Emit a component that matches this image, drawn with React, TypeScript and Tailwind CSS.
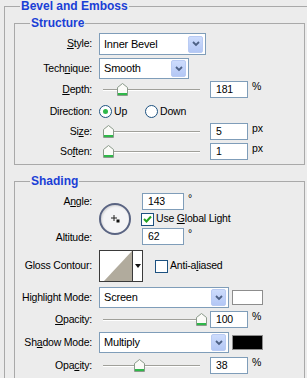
import React from 'react';

const font = { fontFamily: '"Liberation Sans", Arial, sans-serif' };

function Key({ text, k }: { text: string; k?: number }) {
	if (k === undefined) return <>{text}</>;
	return (
		<>
			{text.slice(0, k)}
			<span className="underline underline-offset-[1px]">{text[k]}</span>
			{text.slice(k + 1)}
		</>
	);
}

function Label({ text, k }: { text: string; k?: number }) {
	return (
		<div className="w-[78px] shrink-0 text-right pr-[1px] whitespace-nowrap">
			<Key text={text} k={k} />
		</div>
	);
}

function Chevron() {
	return (
		<div className="w-[15px] h-[17px] mr-[2px] rounded-[2px] bg-gradient-to-b from-[#cddcfc] to-[#b3c7f5] border border-[#b9cbf3] flex items-center justify-center">
			<svg width="8" height="6" viewBox="0 0 8 6">
				<polyline points="1,1 4,4 7,1" fill="none" stroke="#4d6185" strokeWidth="1.8" />
			</svg>
		</div>
	);
}

function Select({ value, w, h = 21 }: { value: string; w: string; h?: number }) {
	return (
		<div
			className={`${w} flex items-center justify-between bg-white border border-[#7f9db9]`}
			style={{ height: h }}
		>
			<span className="pl-[4px] text-[11px]">{value}</span>
			<Chevron />
		</div>
	);
}

function Input({ value, w = 'w-[38px]' }: { value: string; w?: string }) {
	return (
		<div className={`${w} h-[17px] bg-white border border-[#7f9db9] pl-[5px] leading-[15px]`}>{value}</div>
	);
}

function Slider({ pos }: { pos: number }) {
	// pos = thumb centre, px from the slider's left edge
	return (
		<div className="relative w-[106px] h-[14px]">
			<div className="absolute left-[4px] right-[5px] top-[6px] h-[2px] border-t border-[#a0a09a] border-b border-b-white" />
			<svg className="absolute top-0" style={{ left: pos - 5 }} width="11" height="13" viewBox="0 0 11 13">
				<path d="M0.5 4.5 L5.5 0.5 L10.5 4.5 V12.5 H0.5 Z" fill="#fbfbf8" stroke="#8a9a8a" />
				<rect x="1" y="10" width="9" height="2" fill="#2fb84a" />
			</svg>
		</div>
	);
}

function Unit({ text }: { text: string }) {
	return <span className="ml-[4px] self-start leading-[11px]">{text}</span>;
}

function Radio({ checked }: { checked?: boolean }) {
	return (
		<div className="w-[13px] h-[13px] rounded-full border border-[#1c5180] bg-white flex items-center justify-center">
			{checked && <div className="w-[5px] h-[5px] rounded-full bg-[#2fb84a]" />}
		</div>
	);
}

function Checkbox({ checked }: { checked?: boolean }) {
	return (
		<div className="w-[13px] h-[13px] border border-[#1c5180] bg-white flex items-center justify-center">
			{checked && (
				<svg width="9" height="9" viewBox="0 0 9 9">
					<polyline points="1,4 3.5,6.5 8,1.5" fill="none" stroke="#21a121" strokeWidth="2" />
				</svg>
			)}
		</div>
	);
}

export default function App() {
	const sliders = [
		{ label: 'Depth:', k: 0, value: '181', unit: '%', pos: 23 },
	];

	return (
		<div
			className="w-[307px] h-[378px] overflow-hidden bg-[#ececec] text-[10.5px] tracking-[-0.2px] text-black"
			style={font}
		>
			<fieldset className="ml-[4px] w-[320px] border border-[#a9a9a9] px-[9px] pb-4">
				<legend className="ml-[6px] px-[1px] font-bold text-[#1a3fd6] leading-[13px] text-[12px] tracking-normal">
					Bevel and Emboss
				</legend>

				{/* Structure */}
				<fieldset className="mt-[4px] w-[291px] border border-[#a9a9a9] pb-[4px]">
					<legend className="ml-[15px] px-[1px] font-bold text-[#1a3fd6] leading-[13px] text-[12px] tracking-normal">
						Structure
					</legend>

					<div className="flex items-center mt-[3px]">
						<Label text="Style:" k={0} />
						<div className="ml-[6px]">
							<Select value="Inner Bevel" w="w-[107px]" h={22} />
						</div>
					</div>
					<div className="flex items-center mt-[3px]">
						<Label text="Technique:" k={4} />
						<div className="ml-[6px]">
							<Select value="Smooth" w="w-[90px]" />
						</div>
					</div>
					{sliders.map((s) => (
						<div key={s.label} className="flex items-center mt-[2px] h-[17px]">
							<Label text={s.label} k={s.k} />
							<div className="ml-[6px]">
								<Slider pos={s.pos} />
							</div>
							<div className="ml-[5px]">
								<Input value={s.value} />
							</div>
							<Unit text={s.unit} />
						</div>
					))}
					<div className="flex items-center mt-[5px] h-[17px]">
						<Label text="Direction:" />
						<div className="ml-[6px] flex items-center">
							<Radio checked />
							<span className="ml-[2px]">Up</span>
							<div className="ml-[18px]">
								<Radio />
							</div>
							<span className="ml-[2px]">Down</span>
						</div>
					</div>
					<div className="flex items-center mt-[3px] h-[17px]">
						<Label text="Size:" k={2} />
						<div className="ml-[6px]">
							<Slider pos={9} />
						</div>
						<div className="ml-[5px]">
							<Input value="5" />
						</div>
						<Unit text="px" />
					</div>
					<div className="flex items-center mt-[3px] h-[17px]">
						<Label text="Soften:" k={2} />
						<div className="ml-[6px]">
							<Slider pos={9} />
						</div>
						<div className="ml-[5px]">
							<Input value="1" />
						</div>
						<Unit text="px" />
					</div>
				</fieldset>

				{/* Shading */}
				<fieldset className="mt-[10px] w-[291px] border border-[#a9a9a9] pb-[5px]">
					<legend className="ml-[15px] px-[1px] font-bold text-[#1a3fd6] leading-[13px] text-[12px] tracking-normal">
						Shading
					</legend>

					<div className="flex mt-[5px] h-[52px]">
						<div className="w-[78px] shrink-0 flex flex-col justify-between text-right pr-[1px]">
							<div className="h-[16px] leading-[16px]">
								<Key text="Angle:" k={1} />
							</div>
							<div className="h-[16px] leading-[16px]">Altitude:</div>
						</div>
						<div className="ml-[6px] mt-[10px] relative w-[32px] h-[32px] rounded-full border-2 border-[#5a6482] bg-[#f4f4f6] shadow-[inset_1px_1px_2px_rgba(0,0,0,0.15)]">
							<svg className="absolute left-[9px] top-[9px]" width="12" height="12" viewBox="0 0 12 12">
								<line x1="4" y1="1" x2="4" y2="7" stroke="#222" />
								<line x1="1" y1="4" x2="7" y2="4" stroke="#222" />
								<rect x="6.5" y="5.5" width="3" height="3" fill="#111" />
							</svg>
						</div>
						<div className="ml-[11px] flex flex-col justify-between">
							<div className="flex">
								<Input value="143" w="w-[42px]" />
								<Unit text="°" />
							</div>
							<div className="flex items-center -ml-[1px]">
								<Checkbox checked />
								<span className="ml-[2px] whitespace-nowrap">
									Use <Key text="Global" k={0} /> Light
								</span>
							</div>
							<div className="flex">
								<Input value="62" w="w-[42px]" />
								<Unit text="°" />
							</div>
						</div>
					</div>

					<div className="flex items-center mt-[5px]">
						<Label text="Gloss Contour:" />
						<div className="ml-[6px] flex h-[32px] border border-[#3a3a3a] bg-white">
							<svg width="32" height="30" viewBox="0 0 32 30">
								<polygon points="4,30 32,0 32,30" fill="#b1ab9d" />
							</svg>
							<div className="w-[10px] border-l border-[#3a3a3a] flex items-center justify-center">
								<svg width="6" height="4" viewBox="0 0 6 4">
									<polygon points="0,0 6,0 3,4" fill="#111" />
								</svg>
							</div>
						</div>
						<div className="ml-[12px]">
							<Checkbox />
						</div>
						<span className="ml-[2px]">
							<Key text="Anti-aliased" k={6} />
						</span>
					</div>

					<div className="flex items-center mt-[5px]">
						<Label text="Highlight Mode:" k={2} />
						<div className="ml-[6px]">
							<Select value="Screen" w="w-[130px]" />
						</div>
						<div className="ml-[3px] w-[31px] h-[15px] border border-[#8d8d8d] bg-white" />
					</div>
					<div className="flex items-center mt-[3px] h-[17px]">
						<Label text="Opacity:" k={0} />
						<div className="ml-[6px]">
							<Slider pos={102} />
						</div>
						<div className="ml-[5px]">
							<Input value="100" />
						</div>
						<Unit text="%" />
					</div>
					<div className="flex items-center mt-[4px]">
						<Label text="Shadow Mode:" k={2} />
						<div className="ml-[6px]">
							<Select value="Multiply" w="w-[130px]" />
						</div>
						<div className="ml-[3px] w-[31px] h-[15px] border border-[#8d8d8d] bg-black" />
					</div>
					<div className="flex items-center mt-[4px] h-[17px]">
						<Label text="Opacity:" k={3} />
						<div className="ml-[6px]">
							<Slider pos={40} />
						</div>
						<div className="ml-[5px]">
							<Input value="38" />
						</div>
						<Unit text="%" />
					</div>
				</fieldset>
			</fieldset>
		</div>
	);
}
